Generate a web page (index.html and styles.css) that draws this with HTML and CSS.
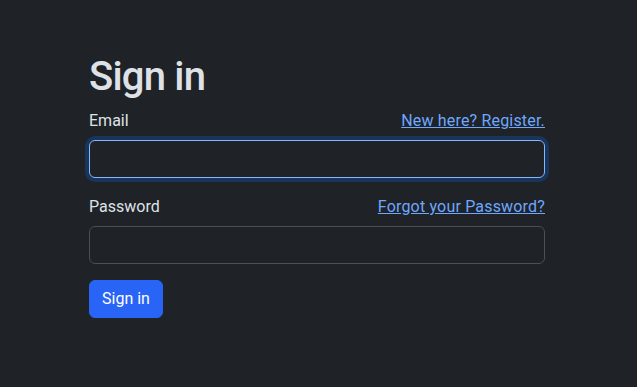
FILE: index.html
```html
<!DOCTYPE html>
<html lang="en">
<head>
<meta charset="utf-8">
<title>Sign in</title>
<link rel="stylesheet" href="styles.css">
</head>
<body>
<main class="page">
  <form class="signin">
    <h1 class="title">Sign in</h1>
    <div class="field">
      <div class="label-row">
        <label class="label" for="email">Email</label>
        <a class="link" href="#">New here? Register.</a>
      </div>
      <input class="control control-focus" id="email" type="email">
    </div>
    <div class="field">
      <div class="label-row">
        <label class="label" for="password">Password</label>
        <a class="link" href="#">Forgot your Password?</a>
      </div>
      <input class="control" id="password" type="password">
    </div>
    <button class="btn" type="button">Sign in</button>
  </form>
</main>
</body>
</html>
```
FILE: styles.css
```css
* { box-sizing: border-box; }
html, body {
  margin: 0;
  height: 100%;
  background: #1f2226;
  color: #dee2e6;
  font-family: Roboto, "Noto Sans", sans-serif;
  font-size: 16px;
  line-height: 1.5;
}
.page {
  padding: 53px 92px 0 89px;
}
.signin {
  display: flex;
  flex-direction: column;
}
.title {
  margin: 0 0 7px;
  font-size: 40px;
  font-weight: 500;
  line-height: 1.2;
  letter-spacing: -0.8px;
  color: #dee2e6;
}
.field {
  display: flex;
  flex-direction: column;
  margin-bottom: 16px;
}
.label-row {
  display: flex;
  justify-content: space-between;
  align-items: baseline;
  padding-top: 1px;
  margin-bottom: 7px;
}
.label { color: #dee2e6; }
.link {
  color: #6ea8fe;
  text-decoration: underline;
  letter-spacing: 0.18px;
}
.control {
  height: 38px;
  width: 100%;
  background: #1f2226;
  border: 1px solid #495057;
  border-radius: 6px;
  color: #dee2e6;
  font: inherit;
  padding: 6px 12px;
  outline: none;
}
.control-focus {
  border-color: #86b7fe;
  box-shadow: 0 0 0 4px rgba(13, 110, 253, 0.25);
}
.btn {
  align-self: flex-start;
  height: 38px;
  padding: 6px 12px;
  background: #2864f6;
  border: 1px solid #2864f6;
  border-radius: 6px;
  color: #fff;
  font: inherit;
  cursor: pointer;
}
```
